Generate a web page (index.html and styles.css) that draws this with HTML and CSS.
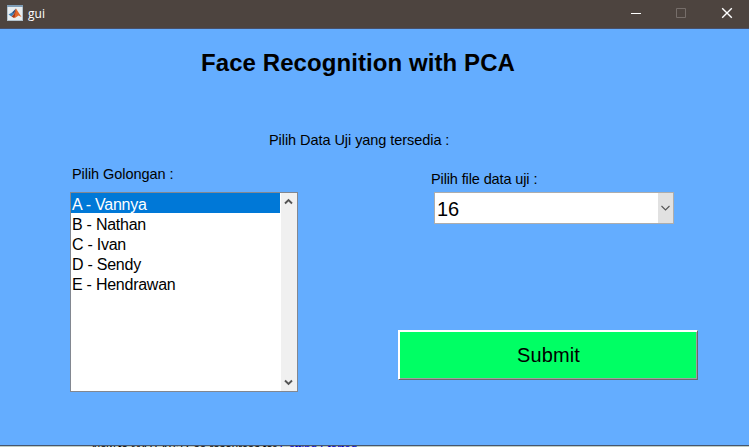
FILE: index.html
```
<!DOCTYPE html>
<html lang="id">
<head>
<meta charset="utf-8">
<title>gui</title>
<link rel="stylesheet" href="styles.css">
</head>
<body>
<div class="window">
  <header class="titlebar">
    <svg class="app-icon" width="16" height="16" viewBox="0 0 16 16">
      <rect width="16" height="16" fill="#e9eef0"/>
      <rect x=".5" y=".5" width="15" height="15" fill="none" stroke="#b4c3cd"/>
      <rect width="16" height="2" fill="#7f9db6"/>
      <path d="M1.5 9.5 5 7.5 7 9 4.5 11.5z" fill="#3c7fb5"/>
      <path d="M5 7.5 9 3.5 7 9z" fill="#284c7c"/>
      <path d="M9 3.5 7 9 4.5 11.5 7 13 9.5 11z" fill="#a43b1c"/>
      <path d="M9 3.5 14.5 12 11.5 10.5 7.5 13.2z" fill="#e2672a"/>
    </svg>
    <span class="app-name">gui</span>
    <div class="controls">
      <svg width="12" height="12" viewBox="0 0 12 12"><path d="M2 6.5h10" stroke="#fff"/></svg>
      <svg width="12" height="12" viewBox="0 0 12 12"><path d="M1.5 1.5h9v9h-9z" fill="none" stroke="#766e6a"/></svg>
      <svg width="12" height="12" viewBox="0 0 12 12"><path d="M1.2 1.2l9.6 9.6M10.8 1.2l-9.6 9.6" stroke="#fff" stroke-width="1.4"/></svg>
    </div>
  </header>
  <main class="client">
    <h1 class="title">Face Recognition with PCA</h1>
    <p class="label subtitle">Pilih Data Uji yang tersedia :</p>
    <div class="columns">
      <section class="group">
        <p class="label">Pilih Golongan :</p>
        <div class="listbox">
          <ul class="items">
            <li class="item selected">A - Vannya</li>
            <li class="item">B - Nathan</li>
            <li class="item">C - Ivan</li>
            <li class="item">D - Sendy</li>
            <li class="item">E - Hendrawan</li>
          </ul>
          <div class="scrollbar">
            <svg width="9" height="7" viewBox="0 0 9 7"><path d="M1 5.5 4.5 2 8 5.5" fill="none" stroke="#555" stroke-width="1.9"/></svg>
            <svg width="9" height="7" viewBox="0 0 9 7"><path d="M1 1.5 4.5 5 8 1.5" fill="none" stroke="#555" stroke-width="1.9"/></svg>
          </div>
        </div>
      </section>
      <section class="form">
        <p class="label file-label">Pilih file data uji :</p>
        <div class="popup">
          <span class="value">16</span>
          <span class="arrow"><svg width="9" height="6" viewBox="0 0 9 6"><path d="M.5 1 4.5 5 8.5 1" fill="none" stroke="#555" stroke-width="1.1"/></svg></span>
        </div>
        <button class="submit">Submit</button>
      </section>
    </div>
  </main>
  <footer class="behind"><span class="notice">New to MATLAB? See resources for <span class="link">Getting Started</span>.</span></footer>
</div>
</body>
</html>
```

FILE: styles.css
```
* { box-sizing: border-box; }
body, h1, p, ul { margin: 0; padding: 0; }
body {
  font-family: "Liberation Sans", Arial, sans-serif;
  color: #000;
  overflow: hidden;
}
svg { display: block; }
.window { width: 749px; height: 447px; display: flex; flex-direction: column; }
.titlebar {
  height: 29px;
  flex: none;
  display: flex;
  align-items: center;
  padding: 0 16px 2px 7px;
  background: #4d443f;
  border-bottom: 1px solid #48506a;
}
.app-name { margin: 2px 0 0 5px; color: #fff; font: 12px/16px "Open Sans", sans-serif; }
.controls { margin-left: auto; display: flex; gap: 34px; }
.client { flex: none; height: 416px; background: #64adff; }
.title {
  padding-top: 18px;
  margin-left: 201px;
  font-size: 24px;
  line-height: 32px;
  letter-spacing: 0.08px;
  white-space: nowrap;
}
.label { font-size: 14.5px; line-height: 18px; letter-spacing: -0.06px; white-space: nowrap; }
.subtitle { margin: 52px 0 0 269px; }
.columns { display: flex; margin-top: 16px; padding-left: 70px; }
.group { width: 228px; }
.group .label { padding-left: 2px; }
.listbox {
  display: flex;
  height: 200px;
  margin-top: 9px;
  border: 1px solid #828790;
  background: #fff;
}
.items { flex: 1; list-style: none; }
.item { height: 20px; padding-left: 1px; font-size: 16px; line-height: 23px; letter-spacing: -0.25px; white-space: nowrap; }
.selected { background: #0078d7; color: #fff; }
.scrollbar {
  width: 17px;
  display: flex;
  flex-direction: column;
  justify-content: space-between;
  align-items: center;
  padding: 5px 1px 5px 0;
  border-left: 1px solid #fff;
  background: #f0f0f0;
}
.form { margin-left: 100px; width: 300px; padding-top: 5px; }
.file-label { padding-left: 33px; letter-spacing: -0.12px; }
.popup {
  display: flex;
  width: 240px;
  height: 32px;
  margin: 4px 0 0 36px;
  border: 1px solid #adadad;
  background: #fff;
}
.value { flex: 1; padding-left: 2px; font-size: 20px; line-height: 32px; }
.arrow { width: 15px; display: flex; align-items: center; justify-content: center; background: #e1e1e1; }
.submit {
  display: block;
  width: 300px;
  height: 50px;
  margin-top: 106px;
  padding: 0 0 0 1px;
  border: 1px solid;
  border-color: #fff #696969 #696969 #fff;
  box-shadow: inset 1px 1px #fff, inset -1px -1px #a0a0a0;
  background: #00ff64;
  color: #000;
  font: 20px/48px "Liberation Sans", Arial, sans-serif;
  letter-spacing: 0.1px;
}
.behind {
  height: 2px;
  overflow: hidden;
  border-top: 1px solid #46566e;
  background: #c0cdc4;
}
.notice { display: block; margin: -5px 0 0 92px; font-size: 11.5px; line-height: 14px; white-space: nowrap; }
.link { color: #0000d0; }
```
